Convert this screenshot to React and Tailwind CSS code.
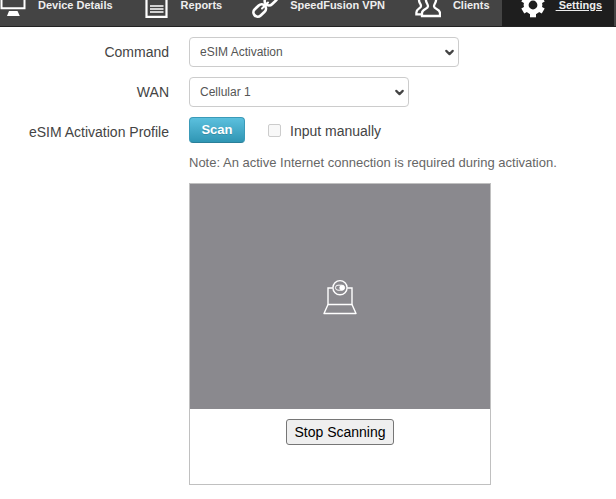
import React, { useState } from 'react';
import { ChevronDown } from 'lucide-react';

const MonitorIcon = () => (
  <svg width="26" height="18" viewBox="0 0 26 18" className="shrink-0">
    <path d="M1.5 -6V8.2H24.5V-6" fill="none" stroke="#fff" strokeWidth="2" />
    <path d="M9 11H17.5L19.8 16H7Z" fill="#fff" />
  </svg>
);

const ReportIcon = () => (
  <svg width="26" height="18" viewBox="0 0 26 18" className="shrink-0">
    <path d="M3.5 -6V16.8H23.5V-6" fill="none" stroke="#fff" strokeWidth="2.2" />
    <path d="M7 6H20.5M7 9H20.5M7 12H20.5" stroke="#fff" strokeWidth="1.6" />
  </svg>
);

const LinkIcon = () => (
  <svg width="26" height="18" viewBox="0 0 26 18" className="shrink-0">
    <g fill="none" stroke="#fff" strokeWidth="2.7" strokeLinecap="round">
      <rect x="0.7" y="6.2" width="14" height="8.6" rx="4.3" transform="rotate(-43 7.7 10.5)" />
      <rect x="12" y="-5" width="14" height="8.6" rx="4.3" transform="rotate(-43 19 -0.7)" />
      <path d="M10 8.5L16 2.5" strokeWidth="2" />
    </g>
  </svg>
);

const ClientsIcon = () => (
  <svg width="26" height="18" viewBox="0 0 26 18" className="shrink-0">
    <g fill="none" stroke="#fff" strokeWidth="2.3">
      <path d="M9 -5C4.5 -4 3.6 -1 4.2 1.5C4.6 3.5 6 4.2 6 6C6 8.5 1.6 8.5 1.4 12.5V14.3H6" />
      <path d="M16 -6C11 -6 10.5 -2 11 0.5C11.4 3.5 13 4.2 13 6.3C13 9.3 7.3 8.8 7 12.8V16H25V12.8C24.7 8.8 19 9.3 19 6.3C19 4.2 20.6 3.5 21 0.5C21.5 -2 21 -6 16 -6Z" />
    </g>
  </svg>
);

const GearIcon = () => (
  <svg width="26" height="18" viewBox="0 0 26 18" className="shrink-0">
    <g stroke="#fff" strokeWidth="6" fill="none">
      <path d="M13 10V17.3" />
      <path d="M8 8L2.8 11" />
      <path d="M18 8L23.2 11" />
      <path d="M8 2L2.8 -1" />
      <path d="M18 2L23.2 -1" />
      <circle cx="13" cy="5" r="6.9" strokeWidth="5" />
    </g>
  </svg>
);

const WebcamIcon = () => (
  <svg width="34" height="36" viewBox="0 0 34 36" fill="none" stroke="#fff" strokeWidth="1.4">
    <path d="M9.7 9H5V25.5H29V9H24.3" />
    <path d="M5 25.5L1 34.5H33L29 25.5" strokeLinejoin="round" />
    <circle cx="17" cy="8.7" r="7.1" />
    <rect x="12.5" y="6.2" width="9" height="5" rx="2.5" strokeWidth="1" />
    <rect x="16.5" y="6.2" width="5" height="5" rx="2" fill="#fff" stroke="none" />
  </svg>
);

const NavItem = ({ icon, label, first }) => (
  <a href="#" className={`flex gap-3 pr-3 ${first ? '' : 'pl-[18px]'}`}>
    {icon}
    <span className="leading-[10px] whitespace-nowrap">{label}</span>
  </a>
);

const Select = ({ id, value, width }) => (
  <div className={`grid items-center ${width}`}>
    <select
      id={id}
      className="col-start-1 row-start-1 w-full h-[30px] appearance-none rounded border border-[#ccc] bg-white pl-2.5 pr-6 text-xs text-[#555]"
    >
      <option>{value}</option>
    </select>
    <ChevronDown
      size={13}
      strokeWidth={4}
      className="col-start-1 row-start-1 justify-self-end mr-[3px] text-[#444] pointer-events-none"
    />
  </div>
);

const App = () => {
  const [manual, setManual] = useState(false);

  return (
    <div className="bg-white text-sm text-[#444] font-['Liberation_Sans',Arial,sans-serif]">
      <nav className="flex h-[27px] overflow-hidden border-b border-[#222] bg-[#444] text-[11px] font-bold text-[#eee]">
        <NavItem first icon={<MonitorIcon />} label="Device Details" />
        <NavItem icon={<ReportIcon />} label="Reports" />
        <NavItem icon={<LinkIcon />} label="SpeedFusion VPN" />
        <NavItem icon={<ClientsIcon />} label="Clients" />
        <a href="#" className="flex gap-2.5 bg-[#1e1e1e] pl-[18px] pr-3">
          <GearIcon />
          <span className="leading-[10px] whitespace-nowrap underline">&nbsp;Settings</span>
        </a>
      </nav>

      <main className="grid grid-cols-[169px_1fr] gap-x-5 gap-y-2.5 pt-2.5 pb-3.5">
        <label htmlFor="command" className="self-center text-right">Command</label>
        <Select id="command" value="eSIM Activation" width="w-[270px]" />

        <label htmlFor="wan" className="self-center text-right">WAN</label>
        <Select id="wan" value="Cellular 1" width="w-[220px]" />

        <span className="pt-[5px] text-right">eSIM Activation Profile</span>
        <div>
          <div className="flex items-center">
            <button className="h-[26px] w-14 rounded border border-[#3a9ab8] border-b-[#2a7f99] bg-linear-to-b from-[#5bc0de] to-[#2f96b4] text-[13px] leading-5 font-bold text-white text-shadow-2xs">
              Scan
            </button>
            <label className="ml-[23px] flex items-center gap-[9px] pt-px">
              <input
                type="checkbox"
                checked={manual}
                onChange={(e) => setManual(e.target.checked)}
                className="size-[13px] appearance-none rounded-xs border border-[#ccc] bg-[#f8f8f8] checked:bg-[#2f96b4]"
              />
              Input manually
            </label>
          </div>
          <p className="pt-2.5 text-[13px] leading-5 text-[#666]">
            Note: An active Internet connection is required during activation.
          </p>
          <div className="mt-2.5 h-[302px] w-[302px] border border-[#c0c0c0] text-center">
            <div className="flex h-[225px] items-center justify-center bg-[#8a898e]">
              <WebcamIcon />
            </div>
            <button className="mt-2.5 h-[26px] rounded-[3px] border border-[#767676] bg-[#efefef] px-[7px] text-black">
              Stop Scanning
            </button>
          </div>
        </div>
      </main>
    </div>
  );
};

export default App;
